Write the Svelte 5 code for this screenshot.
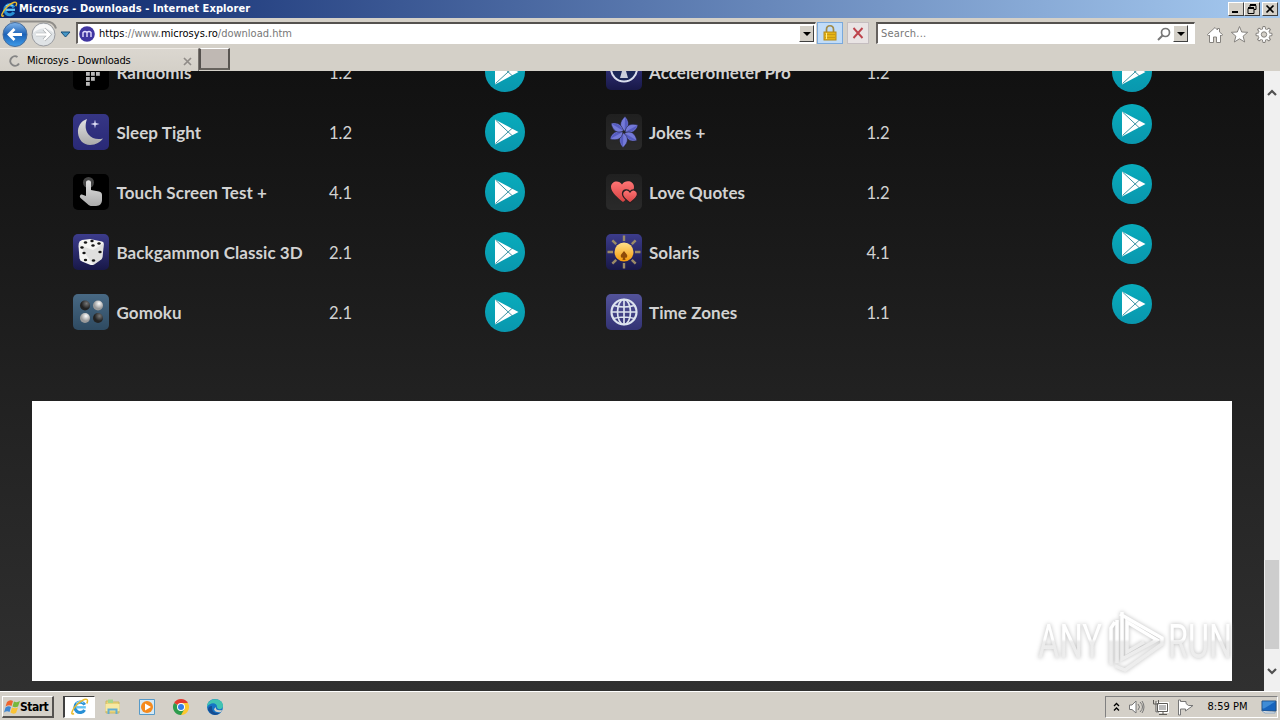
<script lang="ts">
	type App = { icon: string; name: string; version: string };

	const left: App[] = [
		{ icon: 'randomis', name: 'Randomis', version: '1.2' },
		{ icon: 'moon', name: 'Sleep Tight', version: '1.2' },
		{ icon: 'touch', name: 'Touch Screen Test +', version: '4.1' },
		{ icon: 'dice', name: 'Backgammon Classic 3D', version: '2.1' },
		{ icon: 'gomoku', name: 'Gomoku', version: '2.1' }
	];
	const right: App[] = [
		{ icon: 'accel', name: 'Accelerometer Pro', version: '1.2' },
		{ icon: 'jokes', name: 'Jokes +', version: '1.2' },
		{ icon: 'love', name: 'Love Quotes', version: '1.2' },
		{ icon: 'solaris', name: 'Solaris', version: '4.1' },
		{ icon: 'globe', name: 'Time Zones', version: '1.1' }
	];
	const petals = [0, 60, 120, 180, 240, 300];
	const rays = [0, 45, 90, 135, 180, 225, 270, 315];
	const teeth = [0, 45, 90, 135, 180, 225, 270, 315];
	const dots = [
		[13, 13], [18, 13], [23, 13], [13, 18], [18, 18], [23, 18], [13, 23], [18, 23], [13, 28]
	];
	const pips = [
		[12.5, 8.5], [19, 7], [26, 9.5], [20, 11.5], [9, 13.5], [11, 19],
		[12.5, 26], [27, 18], [20.5, 26.5]
	];
</script>

{#snippet ie(size: number)}
	<svg width={size} height={size} viewBox="0 0 18 18">
		<path d="M13.7 6.8A5.2 5.2 0 1 0 13.6 12" fill="none" stroke="#278fd5" stroke-width="3.2" />
		<path d="M5 9.3h9.8" stroke="#65c4f4" stroke-width="2.4" />
		<path d="M5 5.3Q9 2 12.5 5" fill="none" stroke="#a6e3ff" stroke-width="1" />
		<path
			d="M3 15.5C-1 18 1 11.5 6 6.5S16.8-.5 16.5 3c0 1-.5 2-.8 2.5"
			fill="none"
			stroke="#eabb2d"
			stroke-width="1.5"
		/>
	</svg>
{/snippet}

{#snippet appIcon(kind: string)}
	<svg class="app-icon {kind}" viewBox="0 0 36 36">
		{#if kind === 'randomis'}
			{#each dots as [x, y]}
				<rect {x} {y} width="3.8" height="3.8" fill="#b9b9b9" />
			{/each}
		{:else if kind === 'moon'}
			<path
				d="M14 5C8 7 4.500 12.500 5 19c.6 7 5.500 12 12 12 6 0 10.500-3 13-6.500-6 1.500-11 0-14.500-4-3.500-4.500-3.500-10-1.500-15.500Z"
				fill="url(#silver)"
			/>
			<path d="m22 5.500.8 3.500 3.700 1-3.700 1-.8 3.500-.8-3.500-3.700-1 3.700-1Z" fill="#dcdcf5" />
		{:else if kind === 'touch'}
			<circle cx="15.500" cy="8.500" r="5.500" fill="#454545" />
			<path
				d="M13 8.500c0-3 5-3 5 0V16l8 1.500c2 .4 3 1.500 3 3.500v5c0 3-2 6-6 6h-4c-2 0-3-.6-4.500-2L7.500 24c-1.500-1.800 0-4 2-3.300l3.500 1.400Z"
				fill="url(#silver)"
			/>
		{:else if kind === 'dice'}
			<path
				d="M9 6 17 5l12 2.500q2 .5 1.800 3L29.500 23q-.2 1.500-1.500 2.500L21 30.500q-2 1-4 .2L9 27.500q-2-1-2.500-3L5.500 12q0-3 1-4.500Z"
				fill="#f4f4f2"
			/>
			<path d="m6 11 14 5 10.500-6.500L29 25l-8.500 6Z" fill="#d2d2d2" opacity=".6" />
			{#each pips as [x, y]}
				<ellipse cx={x} cy={y} rx="1.700" ry="1.300" fill="#151515" />
			{/each}
		{:else if kind === 'gomoku'}
			<circle cx="12" cy="11.500" r="5" fill="url(#black-ball)" />
			<circle cx="25" cy="11.500" r="5" fill="url(#white-ball)" />
			<circle cx="12" cy="24" r="5" fill="url(#white-ball)" />
			<circle cx="25" cy="24" r="5" fill="url(#black-ball)" />
		{:else if kind === 'accel'}
			<circle cx="18" cy="14.500" r="13" fill="#1c2858" stroke="#d9dded" stroke-width="2" />
			<path d="m18 10 4 14h-8Z" fill="#ccd0db" />
		{:else if kind === 'jokes'}
			{#each petals as angle}
				<path
					d="M18.500 17C13 13 13.500 7.500 19 2.500c4.500 4.500 4.500 10-.5 14.500Z"
					transform="rotate({angle} 18 18)"
					fill="#747ad8"
					stroke="#202036"
					stroke-width=".5"
				/>
				<path
					d="M19 3.500c3.500 4 3.500 9-.3 12.500Z"
					transform="rotate({angle} 18 18)"
					fill="#565cc0"
				/>
			{/each}
		{:else if kind === 'love'}
			<path
				d="M17 28C12 24 5 18 5 13c0-6 8-7.500 11-2.500 3-5 12-4 12 2.500 0 6-6 11-11 15Z"
				fill="url(#heart)"
			/>
			<path
				d="M24 29c-4-3-7.500-6-7.500-9 0-4.500 5.500-5.500 7.500-2 2-3.500 7.500-2.500 7.500 2 0 3-3.500 6-7.500 9Z"
				fill="url(#heart)"
				stroke="#262022"
				stroke-width="1.300"
			/>
		{:else if kind === 'solaris'}
			{#each rays as angle}
				<path d="M18 1.500v5.500" transform="rotate({angle} 18 18)" stroke="#9b8b67" stroke-width="2.400" />
			{/each}
			<circle cx="18" cy="18" r="9.500" fill="url(#sun)" />
			<path d="M18 17c-2 3-4 3.500-3 6 .5 1 1.500 1 2 .5L16.500 26h3l-.5-2.500c.5.5 1.500.5 2-.5 1-2.500-1-3-3-6Z" fill="#8e4b08" />
		{:else if kind === 'globe'}
			<g fill="none" stroke="#dce3ee" stroke-width="1.700">
				<circle cx="18" cy="18" r="12.500" stroke-width="2.200" />
				<ellipse cx="18" cy="18" rx="6.500" ry="12.500" />
				<path d="M18 5v26M5 18h26M7.500 11.500q10.500 3 21 0m-21 13q10.500-3 21 0" />
			</g>
		{/if}
	</svg>
{/snippet}

{#snippet column(apps: App[], side: string)}
	<div class="column {side}">
		{#each apps as app}
			<div class="row">
				{@render appIcon(app.icon)}
				<b>{app.name}</b>
				<span>{app.version}</span>
				<svg class="play" viewBox="0 0 40 40">
					<circle cx="20" cy="20" r="20" fill="url(#teal)" />
					<path d="M10 7.500 33.500 20 10 32.500Z" fill="#fff" />
					<path d="m10.500 8 17.500 16.500m-17.500 7L28 15.500" stroke="#27899a" stroke-width=".9" />
				</svg>
			</div>
		{/each}
	</div>
{/snippet}

<svg class="defs" width="0" height="0">
	<defs>
		<linearGradient id="silver" x2="0" y2="1"><stop stop-color="#e2e2e2" /><stop offset="1" stop-color="#aaa" /></linearGradient>
		<linearGradient id="teal" x2="0" y2="1"><stop stop-color="#08acbc" /><stop offset="1" stop-color="#0997ae" /></linearGradient>
		<linearGradient id="heart" x2="0" y2="1"><stop stop-color="#ff7474" /><stop offset="1" stop-color="#d54242" /></linearGradient>
		<linearGradient id="sun" x2="0" y2="1"><stop stop-color="#ffe08a" /><stop offset="1" stop-color="#f59a08" /></linearGradient>
		<radialGradient id="black-ball" cx=".65" cy=".3"><stop stop-color="#777" /><stop offset="1" stop-color="#222" /></radialGradient>
		<radialGradient id="white-ball" cx=".6" cy=".3"><stop stop-color="#fff" /><stop offset="1" stop-color="#999" /></radialGradient>
		<linearGradient id="nav" x2="0" y2="1"><stop stop-color="#83b5ea" /><stop offset=".5" stop-color="#1c62b7" /><stop offset="1" stop-color="#3f9dea" /></linearGradient>
		<linearGradient id="stamp" gradientUnits="userSpaceOnUse" x1="0" y1="0" x2="0" y2="70">
			<stop offset=".46" stop-color="#fff" />
			<stop offset=".5" stop-color="#ececec" />
			<stop offset="1" stop-color="#eee" />
		</linearGradient>
	</defs>
</svg>

<div class="screen">
	<header class="title">
		{@render ie(17)}
		<b>Microsys - Downloads - Internet Explorer</b>
		<div class="caption">
			<i><svg width="14" height="12"><path d="M3 9h6" stroke="#000" stroke-width="2" /></svg></i>
			<i><svg width="14" height="12"><path d="M5 2.500h6v4H9M5 2v2.500M3 5.500h6v5H3Z" fill="none" stroke="#000" /><path d="M5 2h6M3 5h6" stroke="#000" stroke-width="2" /></svg></i>
			<i class="gap"><svg width="14" height="12"><path d="m3.500 2.500 7 7m0-7-7 7" stroke="#000" stroke-width="1.700" /></svg></i>
		</div>
	</header>

	<div class="toolbar">
		<svg class="nav" width="76" height="30">
			<path d="M10 2.500h36q8 0 10 7" fill="none" stroke="#8f8d89" stroke-width="2" />
			<circle cx="15" cy="15.500" r="12" fill="url(#nav)" stroke="#486d9b" />
			<path d="M22 15.500H9m5.500-5.500L9 15.500l5.500 5.500" fill="none" stroke="#fff" stroke-width="2.800" />
			<circle cx="43.500" cy="15.500" r="11.500" fill="#dfe3e6" stroke="#999b9f" />
			<path d="M33 14q10.500-9 21 0-2-9-10.500-9T33 14Z" fill="#f8f8f8" />
			<path d="M36 15.500h13m-5-5.500 5.500 5.500L44 21" fill="none" stroke="#a9adaf" stroke-width="3.600" />
			<path d="M36 15.500h13m-5-5.500 5.500 5.500L44 21" fill="none" stroke="#fff" stroke-width="2.400" />
			<path d="M61 13h9l-4.500 5Z" fill="#4496c7" stroke="#174e79" />
		</svg>
		<div class="field address">
			<svg width="16" height="16"><circle cx="8" cy="8" r="7.800" fill="#4035a0" /><path d="M4 11V6.500q2-2 4 0V11m0-4.500q2-2 4 0V11" fill="none" stroke="#e4ddff" stroke-width="1.400" /></svg>
			<span><em>https</em>://www.<em>microsys.ro</em>/download.htm</span>
			<i class="drop"></i>
		</div>
		<div class="tool lock">
			<svg width="16" height="18"><path d="M4.500 9V5.500c0-5 7-5 7 0V9" fill="none" stroke="#a08a48" stroke-width="1.700" /><rect x="2" y="8" width="12" height="8" fill="#e5b416" stroke="#b58a1c" /><path d="M3 10.500h10M3 13.500h10" stroke="#c99a15" /><path d="M4.500 9v6" stroke="#ffed8a" /></svg>
		</div>
		<div class="tool stop">
			<svg width="14" height="14"><path d="m2.500 2 9 10m0-10-9 10" stroke="#bd444c" stroke-width="1.900" /></svg>
		</div>
		<div class="field search">
			<span>Search...</span>
			<svg width="14" height="14"><circle cx="8.500" cy="5.500" r="4" fill="none" stroke="#777" stroke-width="1.700" /><path d="M5.500 8.500 1 13" stroke="#777" stroke-width="2" /></svg>
			<i class="drop"></i>
		</div>
		<svg class="commands" width="74" height="20" fill="#fff" stroke="#85827e">
			<path d="m2.500 9.500 7.500-7 2.500 2.500V3.500h2V7l3 2.500-1 1.500-1-1v7.500h-4V12h-3v5.500h-4V10l-1 1Z" />
			<path d="m34.500 1.500 2.200 5.500 6 .3-4.600 3.900 1.600 5.800-5.200-3.200-5.200 3.200 1.600-5.800-4.600-3.900 6-.3Z" />
			{#each teeth as angle}
				<path d="m57.300 5 .6-3.500h2.200l.6 3.500" transform="rotate({angle} 59 9.500)" />
			{/each}
			<circle cx="59" cy="9.500" r="4.400" stroke="#fff" stroke-width="2" />
			<circle cx="59" cy="9.500" r="2.700" fill="#d4d0c8" />
		</svg>
	</div>

	<nav class="tabs">
		<div class="tab">
			<svg width="12" height="12"><path d="M10 8.500A4.700 4.700 0 1 1 8.500 2" fill="none" stroke="#858585" stroke-width="2" /></svg>
			<span>Microsys - Downloads</span>
			<svg width="9" height="9"><path d="m1 1 7 7m0-7L1 8" stroke="#908c88" stroke-width="1.700" /></svg>
		</div>
		<div class="new-tab"></div>
	</nav>

	<div class="viewport">
		<main>
			<div class="columns">
				{@render column(left, 'left')}
				{@render column(right, 'right')}
			</div>
			<div class="blank">
				<svg class="watermark" width="202" height="70" viewBox="0 0 202 70">
					<g font-family="Roboto, sans-serif" font-size="48">
						<text x="8" y="51" textLength="64" lengthAdjust="spacingAndGlyphs">ANY</text>
						<text x="138" y="51" textLength="64" lengthAdjust="spacingAndGlyphs">RUN</text>
					</g>
					<path d="M87 13v43m-6 2V21l4-6m5-8 42 24v6L95 63l-10-4M92 5v47l35-19-30-18v30l17-10" />
				</svg>
			</div>
		</main>
		<aside class="scroll">
			<svg width="10" height="7"><path d="m1 6 4-4 4 4" /></svg>
			<div class="thumb"></div>
			<svg width="10" height="7"><path d="m1 1 4 4 4-4" /></svg>
		</aside>
	</div>

	<footer>
		<div class="start">
			<svg width="16" height="16"><path d="M3 3q3-3 6-1L7.500 7Q5 5.500 1.500 7.500Z" fill="#ef642d" /><path d="M10 2.500q3 1.500 6-.5L14 7.500q-3 1.500-5.500 0Z" fill="#76b83c" /><path d="M1.500 8.500q3-2 5.500-.5L5.500 13Q3 11.500 0 13.500Z" fill="#3f86d1" /><path d="M8 8.500q3 1.500 6 0L12 14q-3 1.500-5.500-.5Z" fill="#fac336" /></svg>
			<b>Start</b>
		</div>
		<div class="task active">{@render ie(18)}</div>
		<div class="task">
			<svg width="18" height="18"><path d="M2 3h5l1 1h7v11H2Z" fill="#ead47a" stroke="#cdb960" /><path d="M4 1.500h5V5H4Z" fill="#a5d58c" /><path d="M1.500 6h14v7h-14Z" fill="#f7e9a2" /><path d="M4.500 16v-4.500h8V16" fill="none" stroke="#62add1" stroke-width="2" /></svg>
		</div>
		<div class="task">
			<svg width="18" height="18"><path d="M1.500 1.500h15v15h-15Z" fill="#d4e9f6" stroke="#579ac8" /><circle cx="9" cy="9" r="6" fill="#f58a1d" /><path d="M7 5.500v7L13 9Z" fill="#fff" /></svg>
		</div>
		<div class="task">
			<svg width="18" height="18"><path d="M9 9 2.070 5a8 8 0 0 1 13.860 0Z" fill="#e33b2e" /><path d="M9 9V5h6.930A8 8 0 0 1 9 17Z" fill="#fdc82f" /><path d="m9 17 3.500-6L9 9 2.070 5A8 8 0 0 0 9 17Z" fill="#2e9c4d" /><circle cx="9" cy="9" r="4" fill="#fff" /><circle cx="9" cy="9" r="3" fill="#357ee8" /></svg>
		</div>
		<div class="task">
			<svg width="18" height="18"><circle cx="9" cy="9" r="8" fill="#1674c5" /><path d="M1 9C1-1 17-1 17 8c0 4-6 4-6 1C11 4 4 4 1 9Z" fill="#41c3b2" /><path d="M6 8q-1 8 8 7-7 5-12-3 0-4 4-4Z" fill="#164d91" /><path d="M10 9q-1 4 6 3l-1 2q-6 1-7-3Z" fill="#d4d0c8" /></svg>
		</div>
		<div class="tray">
			<svg class="chevron" width="7" height="10"><path d="m1 4 2.500-2.500L6 4M1 8.500 3.500 6 6 8.500" fill="none" stroke="#000" stroke-width="1.300" /></svg>
			<svg width="17" height="17" fill="#fff" stroke="#777"><path d="M1.500 6H4l4-4v12L4 10.500H1.500Z" /><path d="M10 5q3 3 0 6m2-8q5 5 0 10m2-11q4 6 0 12" fill="none" /></svg>
			<svg width="18" height="17" fill="none" stroke="#5d5b57"><path d="M5.500 4.500h10v8h-10Z" fill="#bbb" stroke="#fff" stroke-width="3" /><path d="M5.500 4.500h10v8h-10ZM7 15.500h8M11 13v2M1.500 1v4h5V1M4 2v11h3" /></svg>
			<svg width="17" height="17" fill="#fff" stroke="#777"><path d="M1.500 1v15h2V10h5v2l7.500-5.500h-4.500L9 4.500V2.500h-5.500V1Z" /></svg>
			<time>8:59 PM</time>
			<svg width="16" height="14"><path d="M1 1h14v10H1Z" fill="#1764bd" stroke="#26517e" /><path d="M1.500 1.500h13L3 8.500H1.500Z" fill="#3f8cd6" /><path d="m1 11 3 2h10v-1" fill="#eee" stroke="#8ba8c4" /></svg>
		</div>
	</footer>
</div>

<style>
	:global(body) {
		overflow: hidden;
	}

	.screen {
		display: flex;
		flex-direction: column;
		width: 1280px;
		height: 720px;
		background: #d4d0c8;
		color: #000;
		font: 11px/14px 'DejaVu Sans Condensed', 'DejaVu Sans', sans-serif;
	}

	.screen * {
		box-sizing: border-box;
	}

	svg {
		flex: none;
		display: block;
	}

	.defs {
		position: absolute;
	}

	.title {
		display: flex;
		align-items: center;
		height: 18px;
		padding: 0 2px 0 1px;
		background: linear-gradient(90deg, #0a246a, #a6caf0);
		color: #fff;
	}

	.title b {
		margin-left: 1px;
		letter-spacing: 0.08px;
		white-space: nowrap;
	}

	.caption {
		display: flex;
		margin-left: auto;
	}

	.caption i {
		width: 16px;
		height: 14px;
		border: 1px solid #fff;
		border-right-color: #404040;
		border-bottom-color: #404040;
		background: #d4d0c8;
	}

	.caption .gap {
		margin-left: 2px;
	}

	.toolbar {
		display: flex;
		height: 30px;
		align-items: center;
	}

	.nav {
		margin-top: 1px;
	}

	.field {
		display: flex;
		align-items: center;
		height: 22px;
		border: 1px solid #fff;
		border-top: 2px solid #55524f;
		border-left: 2px solid #66625f;
		background: #fff;
		color: #777;
	}

	.address {
		width: 740px;
		padding-left: 1px;
	}

	.address span {
		margin: 1px 0 0 4px;
	}

	em {
		color: #000;
		font-style: normal;
	}

	.drop {
		display: flex;
		align-items: center;
		justify-content: center;
		width: 15px;
		height: 17px;
		margin-left: auto;
		border: 1px solid #fff;
		border-right-color: #404040;
		border-bottom-color: #404040;
		background: #d4d0c8;
	}

	.address .drop {
		margin-right: 1px;
	}

	.drop::after {
		content: '';
		border: 4px solid transparent;
		border-top-color: #000;
		border-bottom: 0;
	}

	.tool {
		display: flex;
		align-items: center;
		justify-content: center;
		height: 22px;
		border: 1px solid #c5bec0;
		background: #e9e4e4;
	}

	.lock {
		width: 26px;
		margin-left: 1px;
		border-color: #7aa9dc;
		background: #c1dcf8;
	}

	.stop {
		width: 22px;
		margin: 0 7px 0 4px;
	}

	.search {
		width: 319px;
		padding: 0 6px 0 3px;
	}

	.search span {
		margin-top: 1px;
		letter-spacing: 0.22px;
	}

	.search svg {
		margin-left: auto;
	}

	.search .drop {
		margin-left: 2px;
	}

	.commands {
		margin: 3px 0 0 10px;
	}

	.tabs {
		display: flex;
		height: 23px;
	}

	.tab {
		display: flex;
		align-items: center;
		width: 199px;
		padding: 2px 6px 0 9px;
		border-top: 1px solid #eeeae4;
		border-right: 1px solid #77736e;
		background: linear-gradient(#dbd7d0, #d4d0c8);
	}

	.tab span {
		margin: 0 auto 0 6px;
		letter-spacing: -0.17px;
	}

	.new-tab {
		width: 31px;
		height: 22px;
		border: 1px solid #fff;
		border-right: 2px solid #585450;
		border-bottom: 2px solid #66625d;
		border-left: 2px solid #55514e;
		background: #bfb8b3;
	}

	.viewport {
		display: flex;
		height: 620px;
	}

	main {
		width: 1264px;
		overflow: hidden;
		background: linear-gradient(#111, #303030);
	}

	.columns {
		display: flex;
		height: 359px;
		margin: -29px 0 0 73px;
		color: #d2d2d2;
		font: 17px/22px Lato, sans-serif;
	}

	.column {
		width: 533px;
	}

	.row {
		display: grid;
		grid-template-columns: 44px 212px 156px 40px;
		align-items: center;
		height: 60px;
	}

	.right .row {
		grid-template-columns: 43.5px 217px 245.5px 40px;
	}

	.row b,
	.row span {
		margin-top: 2px;
		white-space: nowrap;
	}

	.row b {
		margin-left: -0.5px;
		letter-spacing: 0.06px;
	}

	.row span {
		font-size: 16.6px;
	}

	.right .row:not(:first-child) .play {
		margin-top: -16px;
	}

	.app-icon {
		width: 36px;
		height: 36px;
		border-radius: 5px;
		background: #000;
	}

	.app-icon.moon,
	.app-icon.dice,
	.app-icon.accel,
	.app-icon.solaris {
		background: linear-gradient(#3c3c8c, #181848);
	}

	.app-icon.moon {
		background: linear-gradient(#363685, #292976);
	}

	.app-icon.gomoku {
		background: linear-gradient(#486984, #2e4a61);
	}

	.app-icon.jokes,
	.app-icon.love {
		background: linear-gradient(#202020, #2a2a2a);
	}

	.app-icon.globe {
		background: linear-gradient(#53539a, #333374);
	}

	.play {
		width: 40px;
		height: 40px;
	}

	.blank {
		position: relative;
		width: 1200px;
		height: 280px;
		margin-left: 32px;
		background: #fff;
	}

	/* The stamp floats over the lower corner of the panel. */
	.watermark {
		position: absolute;
		right: 0;
		bottom: 4px;
		fill: url(#stamp);
		filter: drop-shadow(0 0 2px #bbb);
	}

	.watermark path {
		fill: none;
		stroke: url(#stamp);
		stroke-width: 3.5;
	}

	.scroll {
		display: flex;
		flex-direction: column;
		align-items: center;
		width: 16px;
		padding: 18px 0 16px;
		background: #f0f0f0;
	}

	.scroll svg {
		fill: none;
		stroke: #505050;
		stroke-width: 2.2;
	}

	.thumb {
		width: 14px;
		height: 89px;
		margin: auto 0 19px;
		background: #cdcdcd;
	}

	footer {
		display: flex;
		align-items: center;
		height: 29px;
		padding: 2px 2px 0;
		border-top: 1px solid #fff;
	}

	.start {
		display: flex;
		align-items: center;
		width: 52px;
		height: 22px;
		margin-right: 9px;
		padding-left: 1px;
		border: 1px solid #fff;
		border-right: 2px solid #55524f;
		border-bottom: 2px solid #55524f;
	}

	.start b {
		font-size: 12px;
		letter-spacing: -0.5px;
	}

	.task {
		display: flex;
		align-items: center;
		justify-content: center;
		width: 32px;
		height: 22px;
		margin-right: 2px;
	}

	.task.active {
		border: 1px solid #fff;
		border-top-color: #404040;
		border-left: 2px solid #404040;
		background: #fff;
	}

	.tray {
		display: flex;
		align-items: center;
		height: 22px;
		width: 173px;
		margin-left: auto;
		padding-left: 7px;
		border: 1px solid #fff;
		border-top-color: #808080;
		border-left-color: #808080;
	}

	.tray svg + svg {
		margin-left: 7px;
	}

	.chevron {
		margin-right: 1px;
	}

	time {
		margin: 0 auto;
		white-space: nowrap;
	}
</style>
